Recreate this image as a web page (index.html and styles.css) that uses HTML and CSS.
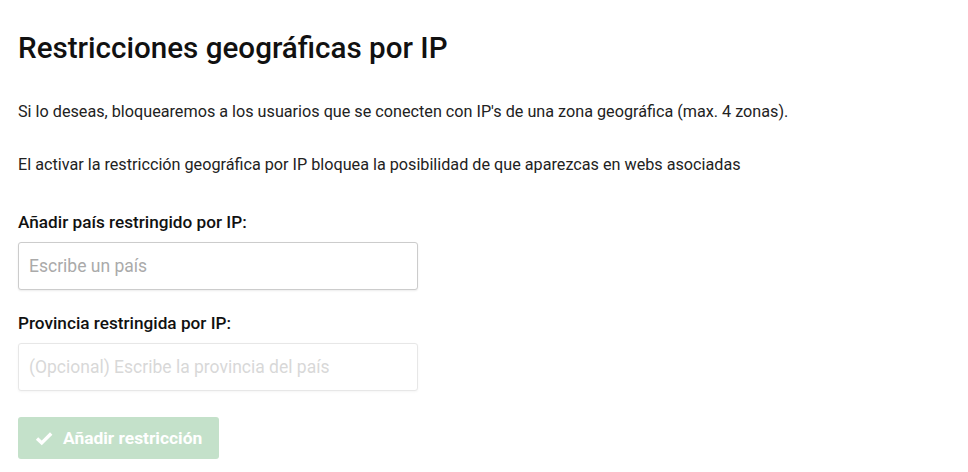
FILE: index.html
```html
<!DOCTYPE html>
<html lang="es">
<head>
  <meta charset="UTF-8">
  <title>Restricciones geográficas por IP</title>
  <link rel="stylesheet" href="styles.css">
</head>
<body>

  <div class="geo-box">
    <h1 class="geo-title">Restricciones geográficas por IP</h1>

    <p class="geo-text">Si lo deseas, bloquearemos a los usuarios que se conecten con IP's de una zona geográfica (max. 4 zonas).</p>
    <p class="geo-text geo-text-last">El activar la restricción geográfica por IP bloquea la posibilidad de que aparezcas en webs asociadas</p>

    <!-- País -->
    <div class="geo-field">
      <label class="geo-label" for="geo-country">Añadir país restringido por IP:</label>
      <input class="geo-input" type="text" id="geo-country" placeholder="Escribe un país">
    </div>

    <!-- Provincia -->
    <div class="geo-field geo-field-last">
      <label class="geo-label" for="geo-province">Provincia restringida por IP:</label>
      <input class="geo-input" type="text" id="geo-province" placeholder="(Opcional) Escribe la provincia del país" disabled>
    </div>

    <button class="geo-btn" disabled>
      <svg class="geo-btn-icon" viewBox="0 0 16 16" width="18" height="18"><path d="M1.8 8.4 L6 12.4 L14.4 4" fill="none" stroke="currentColor" stroke-width="3"/></svg>
      Añadir restricción
    </button>
  </div>

</body>
</html>
```

FILE: styles.css
```css
body { margin: 0; font-family: Roboto, "Liberation Sans", sans-serif; color: #1a1a1a; background: #fff; }
.geo-box { padding: 26px 18px; }
.geo-title { font-size: 29.6px; font-weight: 500; margin: 0 0 32px; line-height: 44px; color: #111; }
.geo-text { font-size: 16.2px; margin: 0 0 33px; line-height: 20px; color: #222; }
.geo-text-last { margin-bottom: 36px; }
.geo-field { margin-bottom: 22px; }
.geo-field-last { margin-bottom: 26px; }
.geo-label { display: block; font-size: 17.2px; font-weight: 500; margin: 0 0 9px; line-height: 22px; color: #111; }
.geo-input { display: block; box-sizing: border-box; width: 400px; height: 48px; padding: 0 10px; border: 1px solid #ccc; border-radius: 3px; font-family: inherit; font-size: 17.5px; color: #333; box-shadow: 0 1px 2px rgba(0,0,0,0.08); }
.geo-input::placeholder { color: #aaa; }
.geo-input:disabled { background: #fff; opacity: 0.45; }
.geo-btn { display: flex; align-items: center; gap: 10px; height: 42px; padding: 0 17px 0 17px; border: none; border-radius: 3px; background: #c4e1ca; color: #fff; font-family: inherit; font-size: 17.4px; font-weight: 700; }
.geo-btn-icon { display: block; }
```
